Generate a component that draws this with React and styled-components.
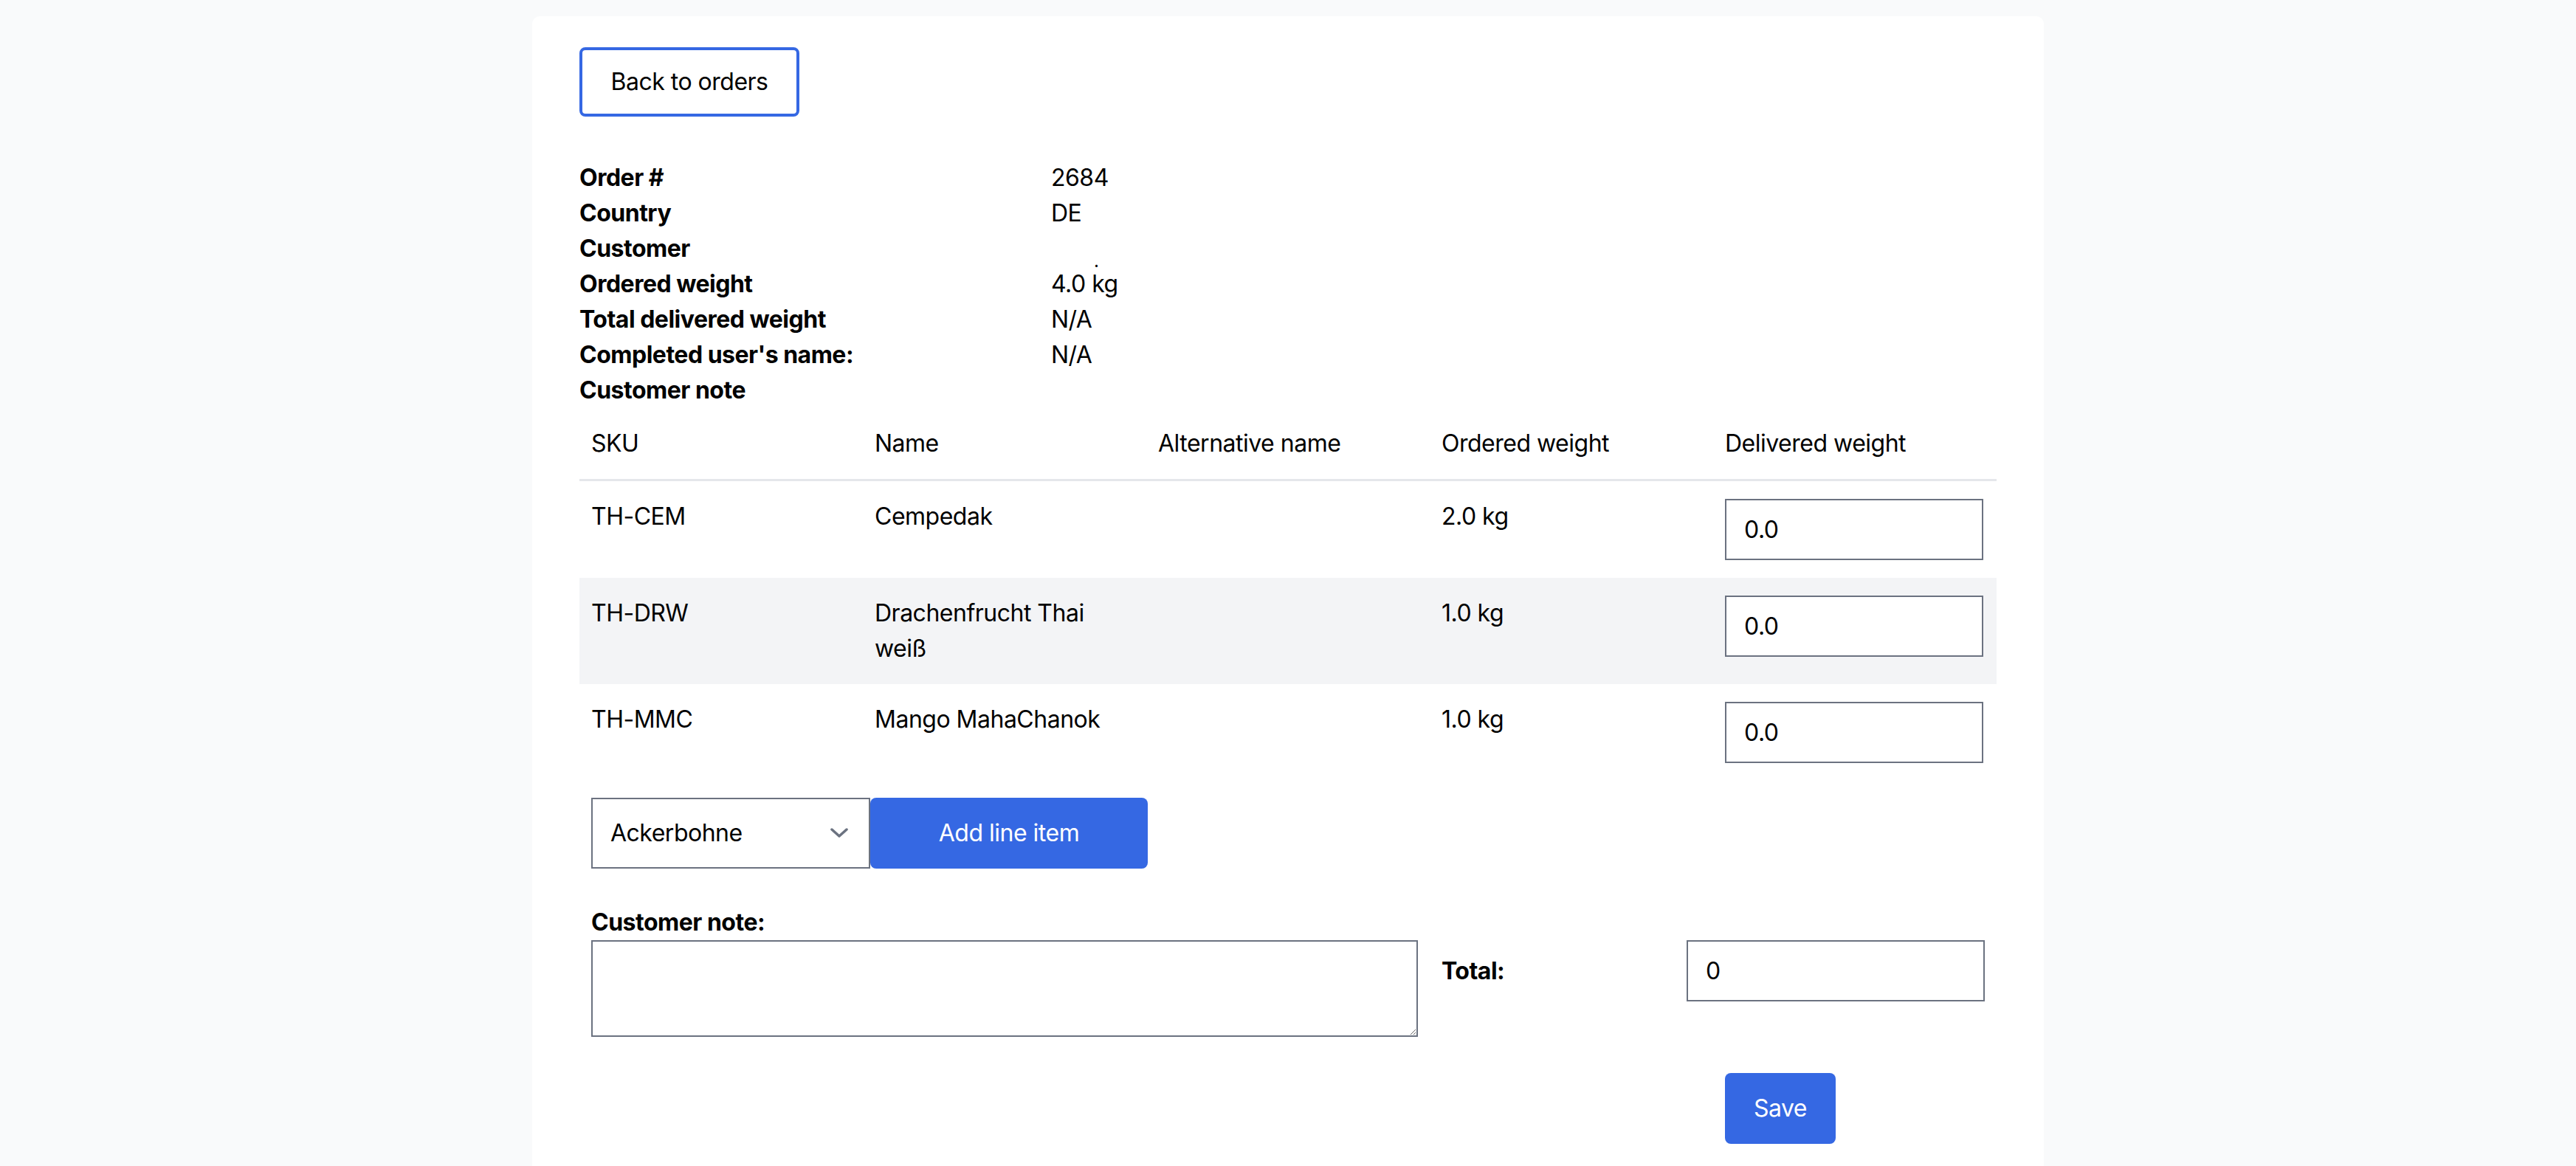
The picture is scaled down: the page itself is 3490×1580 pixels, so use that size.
import React from "react";
import styled, { createGlobalStyle } from "styled-components";

const GlobalStyle = createGlobalStyle`
  html, body {
    margin: 0;
    padding: 0;
    background: #f9fafb;
  }
  body {
    font-family: Inter, "Liberation Sans", sans-serif;
    font-size: 32px;
    line-height: 48px;
    letter-spacing: -0.5px;
    color: #000;
  }
  * { box-sizing: border-box; }
`;

const Page = styled.div`
  padding-top: 22px;
  min-height: 1580px;
`;

const Card = styled.div`
  width: 2048px;
  margin: 0 auto;
  background: #fff;
  border-radius: 10px;
  padding: 42px 64px 120px;
`;

const OutlineButton = styled.button`
  font: inherit;
  letter-spacing: inherit;
  color: #000;
  background: #fff;
  border: 4px solid #3568e3;
  border-radius: 8px;
  height: 94px;
  width: 298px;
  padding: 0;
  cursor: pointer;
`;

const InfoList = styled.dl`
  margin: 59px 0 0;
  display: grid;
  grid-template-columns: 639px 1fr;
  grid-auto-rows: 48px;
`;

const InfoLabel = styled.dt`
  font-weight: 700;
  margin: 0;
`;

const InfoValue = styled.dd`
  margin: 0;
  height: 48px;
`;

const Dot = styled.span`
  display: inline-block;
  margin-left: 58px;
  font-size: 24px;
  line-height: 48px;
  transform: translateY(14px);
`;

const Table = styled.table`
  width: 100%;
  border-collapse: collapse;
  table-layout: fixed;
`;

const HeadCell = styled.th`
  text-align: left;
  font-weight: 400;
  padding: 24px 16px;
  border-bottom: 3px solid #e5e7eb;
`;

const Row = styled.tr`
  background: ${(p) => (p.$striped ? "#f3f4f6" : "#fff")};
`;

const Cell = styled.td`
  padding: 24px 16px;
  vertical-align: top;
`;

const TextInput = styled.input`
  font: inherit;
  letter-spacing: inherit;
  color: #000;
  display: block;
  width: ${(p) => p.$width || "350px"};
  height: 83px;
  padding: 16px 24px;
  border: 2px solid #6b7280;
  border-radius: 0;
  background: #fff;
  outline: none;
`;

const Footer = styled.div`
  display: grid;
  grid-template-columns: repeat(5, 1fr);
  align-items: start;
`;

const AddRow = styled.div`
  grid-column: 1 / -1;
  display: flex;
  padding: 23px 16px 0;
`;

const SelectWrap = styled.div`
  position: relative;
  width: 378px;
  height: 96px;
`;

const Select = styled.select`
  font: inherit;
  letter-spacing: inherit;
  color: #000;
  appearance: none;
  width: 100%;
  height: 100%;
  padding: 0 70px 0 24px;
  border: 2px solid #6b7280;
  border-radius: 0;
  background: #fff;
  outline: none;
`;

const Chevron = styled.svg`
  position: absolute;
  right: 30px;
  top: 50%;
  transform: translateY(-50%);
  pointer-events: none;
`;

const PrimaryButton = styled.button`
  font: inherit;
  letter-spacing: inherit;
  color: #fff;
  background: #3568e3;
  border: none;
  border-radius: 8px;
  height: 96px;
  width: ${(p) => p.$width};
  cursor: pointer;
`;

const NoteCell = styled.div`
  grid-column: 1 / 4;
  padding: 0 16px;
  margin-top: 49px;
`;

const NoteLabel = styled.div`
  font-weight: 700;
`;

const NoteArea = styled.textarea`
  font: inherit;
  display: block;
  width: 100%;
  height: 131px;
  border: 2px solid #6b7280;
  border-radius: 0;
  padding: 16px 24px;
  resize: vertical;
  outline: none;
`;

const TotalCell = styled.div`
  grid-column: 4 / 6;
  display: flex;
  justify-content: space-between;
  align-items: center;
  padding: 0 16px;
  margin-top: 97px;
`;

const TotalLabel = styled.span`
  font-weight: 700;
`;

const SaveCell = styled.div`
  grid-column: 5;
  padding: 0 16px;
  margin-top: 49px;
`;

const items = [
  { sku: "TH-CEM", name: "Cempedak", alt: "", weight: "2.0 kg" },
  { sku: "TH-DRW", name: "Drachenfrucht Thai weiß", alt: "", weight: "1.0 kg" },
  { sku: "TH-MMC", name: "Mango MahaChanok", alt: "", weight: "1.0 kg" },
];

export default function App() {
  return (
    <>
      <GlobalStyle />
      <Page>
        <Card>
          <OutlineButton>Back to orders</OutlineButton>

          <InfoList>
            <InfoLabel>Order #</InfoLabel>
            <InfoValue>2684</InfoValue>
            <InfoLabel>Country</InfoLabel>
            <InfoValue>DE</InfoValue>
            <InfoLabel>Customer</InfoLabel>
            <InfoValue>
              <Dot>.</Dot>
            </InfoValue>
            <InfoLabel>Ordered weight</InfoLabel>
            <InfoValue>4.0 kg</InfoValue>
            <InfoLabel>Total delivered weight</InfoLabel>
            <InfoValue>N/A</InfoValue>
            <InfoLabel>Completed user's name:</InfoLabel>
            <InfoValue>N/A</InfoValue>
            <InfoLabel>Customer note</InfoLabel>
            <InfoValue />
          </InfoList>

          <Table>
            <thead>
              <tr>
                <HeadCell>SKU</HeadCell>
                <HeadCell>Name</HeadCell>
                <HeadCell>Alternative name</HeadCell>
                <HeadCell>Ordered weight</HeadCell>
                <HeadCell>Delivered weight</HeadCell>
              </tr>
            </thead>
            <tbody>
              {items.map((item, i) => (
                <Row key={item.sku} $striped={i % 2 === 1}>
                  <Cell>{item.sku}</Cell>
                  <Cell>{item.name}</Cell>
                  <Cell>{item.alt}</Cell>
                  <Cell>{item.weight}</Cell>
                  <Cell>
                    <TextInput defaultValue="0.0" />
                  </Cell>
                </Row>
              ))}
            </tbody>
          </Table>

          <Footer>
            <AddRow>
              <SelectWrap>
                <Select defaultValue="Ackerbohne">
                  <option>Ackerbohne</option>
                </Select>
                <Chevron width="24" height="14" viewBox="0 0 24 14" fill="none">
                  <path d="M2 2 L12 11 L22 2" stroke="#6b7280" strokeWidth="3.5" strokeLinecap="round" strokeLinejoin="round" />
                </Chevron>
              </SelectWrap>
              <PrimaryButton $width="376px">Add line item</PrimaryButton>
            </AddRow>

            <NoteCell>
              <NoteLabel>Customer note:</NoteLabel>
              <NoteArea />
            </NoteCell>

            <TotalCell>
              <TotalLabel>Total:</TotalLabel>
              <TextInput $width="404px" defaultValue="0" />
            </TotalCell>

            <SaveCell>
              <PrimaryButton $width="150px">Save</PrimaryButton>
            </SaveCell>
          </Footer>
        </Card>
      </Page>
    </>
  );
}
